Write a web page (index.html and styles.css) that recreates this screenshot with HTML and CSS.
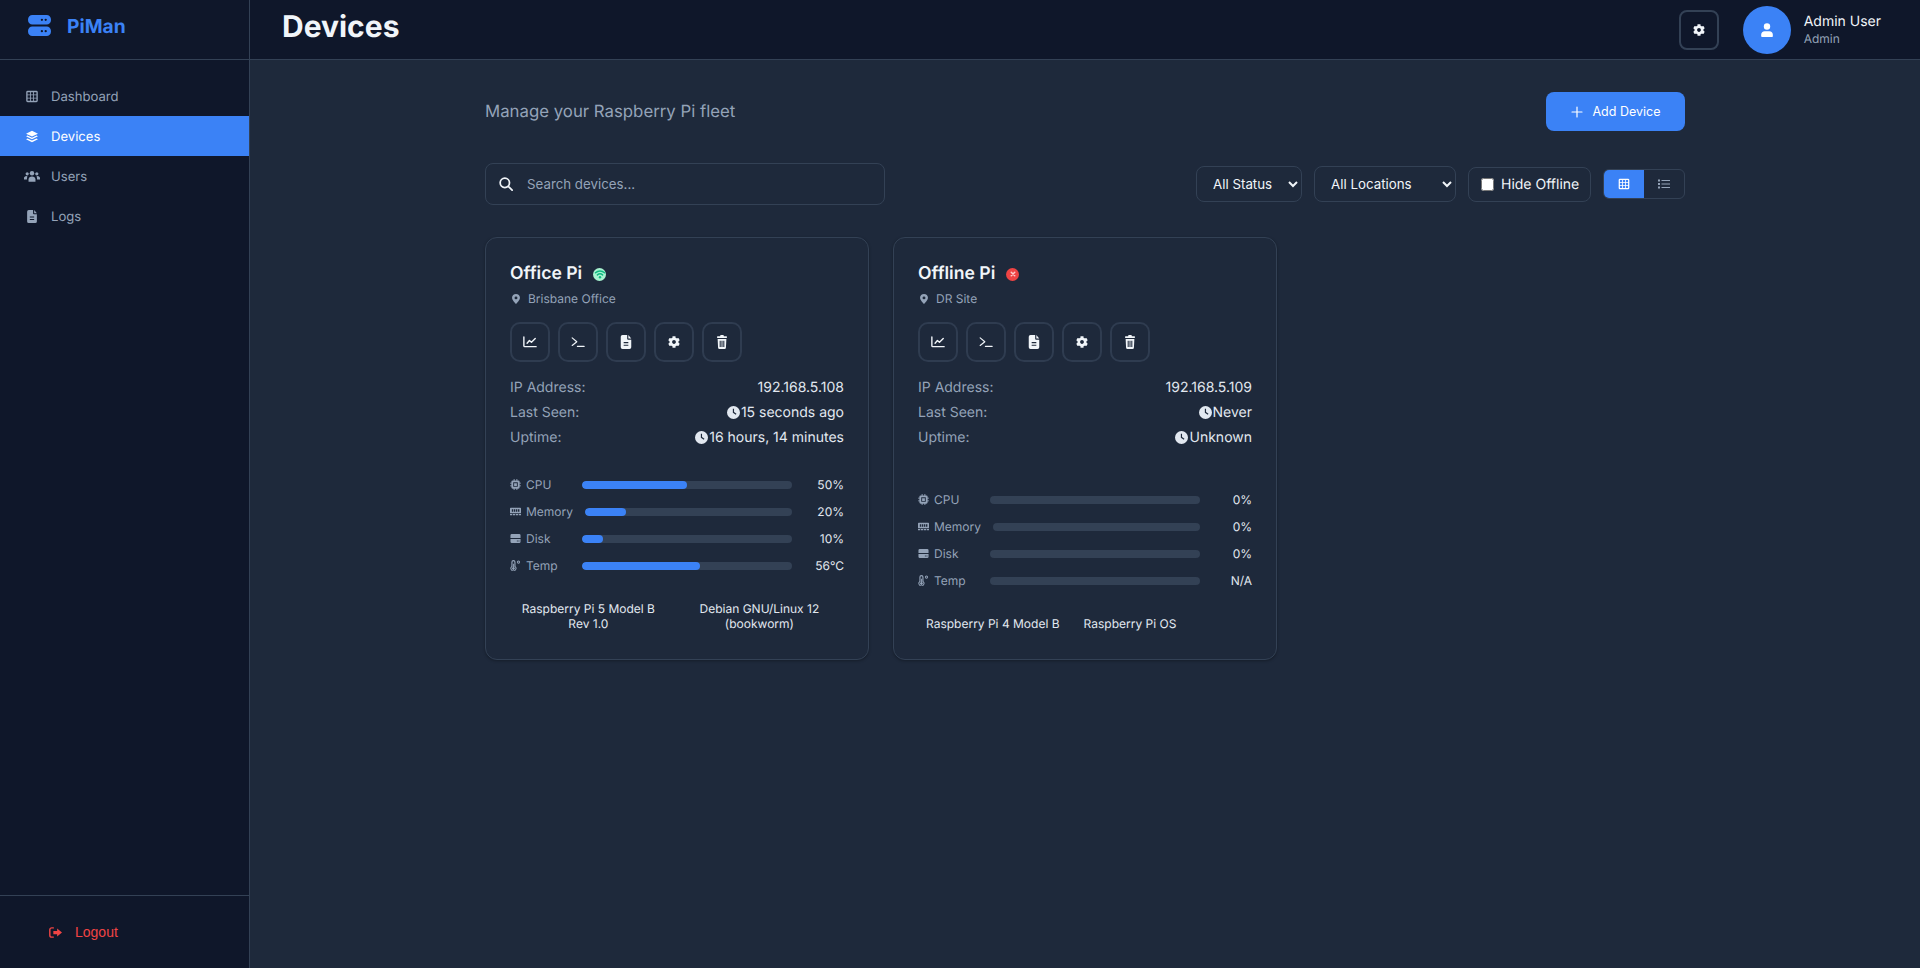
FILE: index.html
```html
<!DOCTYPE html>
<html>
    <head>
        <meta charset="utf-8" />
        <meta name="viewport" content="width=device-width, initial-scale=1" />
        <title>PiMan - Devices</title>
        <link rel="stylesheet" href="styles.css">
    </head>
    <body>
        <!-- icon sprite -->
        <svg class="sprite" xmlns="http://www.w3.org/2000/svg">
            <symbol id="i-server" viewBox="0 0 24 22">
                <path fill-rule="evenodd" d="M4.500 0h15a4.500 4.500 0 0 1 4.500 4.500v1a4.500 4.500 0 0 1-4.500 4.500h-15A4.500 4.500 0 0 1 0 5.500v-1A4.500 4.500 0 0 1 4.500 0zM14.500 3.800a1.200 1.200 0 1 0 0 2.400 1.200 1.200 0 0 0 0-2.400zM18.500 3.800a1.200 1.200 0 1 0 0 2.400 1.200 1.200 0 0 0 0-2.400zM4.500 12h15a4.500 4.500 0 0 1 4.500 4.500v1a4.500 4.500 0 0 1-4.500 4.500h-15A4.500 4.500 0 0 1 0 17.500v-1A4.500 4.500 0 0 1 4.500 12zM14.500 15.800a1.200 1.200 0 1 0 0 2.400 1.200 1.200 0 0 0 0-2.400zM18.500 15.800a1.200 1.200 0 1 0 0 2.400 1.200 1.200 0 0 0 0-2.400z"/>
            </symbol>
            <symbol id="i-grid" viewBox="-1.500 -1.500 27 27">
                <path fill-rule="evenodd" d="M3 0h18a3 3 0 0 1 3 3v18a3 3 0 0 1-3 3H3a3 3 0 0 1-3-3V3a3 3 0 0 1 3-3zM2.800 3v4.800h5V3zM9.600 3v4.800h4.800V3zM16.200 3v4.800h5V3zM2.800 9.600v4.800h5V9.600zM9.600 9.600v4.800h4.800V9.600zM16.200 9.600v4.800h5V9.600zM2.800 16.200V21h5v-4.800zM9.600 16.200V21h4.800v-4.800zM16.200 16.200V21h5v-4.800z"/>
            </symbol>
            <symbol id="i-layers" viewBox="0 0 24 24">
                <path d="M12 1.500l11 5.200-11 5.200L1 6.700z"/>
                <path d="M3.800 10.300L12 14.200l8.200-3.900 2.800 1.400-11 5.200-11-5.200z"/>
                <path d="M3.800 15.600L12 19.500l8.200-3.900 2.800 1.400-11 5.500L1 17z"/>
            </symbol>
            <symbol id="i-users" viewBox="0 0 30 24">
                <circle cx="6" cy="7" r="3"/><circle cx="24" cy="7" r="3"/><circle cx="15" cy="6" r="4.200"/>
                <path d="M8.500 22v-4.500c0-3.300 2.700-5.500 6.500-5.500s6.500 2.200 6.500 5.500V22z"/>
                <path d="M6.500 12c-.8 1.400-1 3.300-1 5.500H0v-2.500C0 12.800 2 11 4.500 11c.8 0 1.400.4 2 1zM23.500 12c.8 1.400 1 3.300 1 5.500H30v-2.500c0-2.200-2-4-4.500-4-.8 0-1.400.4-2 1z"/>
            </symbol>
            <symbol id="i-file" viewBox="0 0 24 24">
                <path fill-rule="evenodd" d="M6 0h8v6.500c0 1 .8 1.500 1.500 1.500H21v13a3 3 0 0 1-3 3H6a3 3 0 0 1-3-3V3a3 3 0 0 1 3-3zM8 12v2h8v-2zM8 16.500v2h8v-2zM16 0l5 6h-5z"/>
            </symbol>
            <symbol id="i-chart" viewBox="0 0 24 24">
                <path fill="none" stroke="currentColor" stroke-width="2.400" stroke-linecap="round" stroke-linejoin="round" d="M1.500 3.500v15c0 1 .5 1.500 1.500 1.500h19.500M7 14l4-4.500 3.500 3L21 6"/>
            </symbol>
            <symbol id="i-terminal" viewBox="0 0 24 24">
                <path fill="none" stroke="currentColor" stroke-width="2" stroke-linecap="round" stroke-linejoin="round" d="M2 5l8 6.500L2 18M11 19.500h11.500"/>
            </symbol>
            <symbol id="i-gear" viewBox="-40 -40 592 592">
                <path d="M487.4 315.7l-42.6-24.6c4.3-23.2 4.3-47 0-70.2l42.6-24.6c4.9-2.8 7.1-8.6 5.500-14-11.100-35.600-30-67.800-54.700-94.600-3.800-4.100-10-5.100-14.800-2.300L380.800 110c-17.900-15.400-38.500-27.300-60.800-35.100V25.800c0-5.600-3.900-10.500-9.400-11.700-36.700-8.200-74.300-7.800-109.200 0-5.500 1.200-9.400 6.100-9.400 11.700V75c-22.200 7.900-42.800 19.800-60.800 35.100L88.700 85.500c-4.900-2.800-11-1.900-14.800 2.300-24.700 26.700-43.600 58.900-54.700 94.600-1.700 5.400.6 11.200 5.500 14L67.300 221c-4.300 23.200-4.300 47 0 70.200l-42.600 24.600c-4.900 2.800-7.100 8.600-5.500 14 11.100 35.600 30 67.800 54.700 94.600 3.800 4.100 10 5.100 14.800 2.300l42.600-24.600c17.900 15.400 38.500 27.300 60.800 35.100v49.200c0 5.600 3.900 10.500 9.400 11.700 36.700 8.200 74.300 7.800 109.200 0 5.500-1.200 9.400-6.100 9.400-11.700v-49.200c22.200-7.900 42.800-19.800 60.800-35.100l42.600 24.600c4.900 2.800 11 1.900 14.800-2.300 24.700-26.700 43.600-58.900 54.700-94.600 1.500-5.500-.7-11.300-5.600-14.100zM256 336c-44.100 0-80-35.900-80-80s35.900-80 80-80 80 35.900 80 80-35.900 80-80 80z"/>
            </symbol>
            <symbol id="i-trash" viewBox="0 0 24 24">
                <path fill-rule="evenodd" d="M9.500 0h5l.8 2h4.200a1 1 0 0 1 1 1v1.300a.7.7 0 0 1-.7.7H4.200a.7.7 0 0 1-.7-.7V3a1 1 0 0 1 1-1h4.200zM4.500 6.800h15l-.8 14.900a2.400 2.400 0 0 1-2.400 2.300H7.700a2.400 2.400 0 0 1-2.400-2.300zM8 10v10.500h1.800V10zM11.100 10v10.500h1.800V10zM14.200 10v10.500H16V10z"/>
            </symbol>
            <symbol id="i-pin" viewBox="0 0 24 24">
                <path fill-rule="evenodd" d="M12 0c5.500 0 9.500 4 9.500 9.200C21.500 14 15 21.500 12 24 9 21.500 2.500 14 2.500 9.200 2.500 4 6.500 0 12 0zM12 5.800a3.500 3.500 0 1 0 0 7 3.500 3.500 0 0 0 0-7z"/>
            </symbol>
            <symbol id="i-clock" viewBox="0 0 24 24">
                <path fill-rule="evenodd" d="M12 0a12 12 0 1 1 0 24 12 12 0 0 1 0-24zM10.800 5v7.600l5.400 3.600 1.300-1.900-4.500-3V5z"/>
            </symbol>
            <symbol id="i-chip" viewBox="0 0 24 24">
                <path fill-rule="evenodd" d="M8 0h2v3h4V0h2v3h2a3 3 0 0 1 3 3v2h3v2h-3v4h3v2h-3v2a3 3 0 0 1-3 3h-2v3h-2v-3h-4v3H8v-3H6a3 3 0 0 1-3-3v-2H0v-2h3v-4H0V8h3V6a3 3 0 0 1 3-3h2zM7 7v10h10V7zM9 9h6v6H9z"/>
            </symbol>
            <symbol id="i-memory" viewBox="0 0 24 24">
                <path fill-rule="evenodd" d="M1.500 4h21A1.500 1.500 0 0 1 24 5.500v10.500H0V5.500A1.500 1.500 0 0 1 1.500 4zM4 7v5.500h3V7zM8.500 7v5.500h3V7zM13 7v5.500h3V7zM17.500 7v5.500h3V7zM0 17.500h5V20H0zM6.500 17.500h5V20h-5zM13 17.500h5V20h-5zM19.500 17.500H24V20h-4.500z"/>
            </symbol>
            <symbol id="i-disk" viewBox="0 0 24 24">
                <path fill-rule="evenodd" d="M4 2h16a3 3 0 0 1 3 3v6H1V5a3 3 0 0 1 3-3zM1 13h22v6a3 3 0 0 1-3 3H4a3 3 0 0 1-3-3zM15 16.300v2h2v-2zM18.500 16.300v2h2v-2z"/>
            </symbol>
            <symbol id="i-temp" viewBox="0 0 24 24">
                <path fill-rule="evenodd" d="M7.500 0a4.500 4.500 0 0 1 4.500 4.500v9a6.500 6.500 0 1 1-9 0v-9A4.500 4.500 0 0 1 7.500 0zm0 2.500a2 2 0 0 0-2 2v10.200a4.200 4.200 0 1 0 4 0V4.500a2 2 0 0 0-2-2zM6.500 8h2v8a2.800 2.800 0 1 1-2 0z"/>
                <path fill-rule="evenodd" d="M18.500 1a3.500 3.500 0 1 1 0 7 3.500 3.500 0 0 1 0-7zm0 2a1.500 1.500 0 1 0 0 3 1.500 1.500 0 0 0 0-3z"/>
            </symbol>
            <symbol id="i-search" viewBox="0 0 24 24">
                <path fill="none" stroke="currentColor" stroke-width="3" stroke-linecap="round" d="M10 2a8 8 0 1 1 0 16 8 8 0 0 1 0-16zM16 16l6.500 6.500"/>
            </symbol>
            <symbol id="i-plus" viewBox="0 0 24 24">
                <path fill="none" stroke="currentColor" stroke-width="2.400" stroke-linecap="round" d="M12 2v20M2 12h20"/>
            </symbol>
            <symbol id="i-user" viewBox="0 0 24 24">
                <circle cx="12" cy="6" r="5.500"/>
                <path d="M8 14h8c3.500 0 6 2.500 6 6v2.500c0 .8-.7 1.500-1.500 1.500h-17C2.700 24 2 23.300 2 22.500V20c0-3.500 2.500-6 6-6z"/>
            </symbol>
            <symbol id="i-logout" viewBox="0 0 24 24">
                <path d="M15 4.500L24 12l-9 7.500V15H8V9h7z"/>
                <path fill="none" stroke="currentColor" stroke-width="2.600" stroke-linecap="round" d="M8 3.500H5C3 3.500 1.500 5 1.500 7v10c0 2 1.500 3.500 3.500 3.500h3"/>
            </symbol>
            <symbol id="i-list" viewBox="0 0 24 24">
                <path d="M0 3h4v4H0zM0 10h4v4H0zM0 17h4v4H0z"/>
                <path d="M7 4h17v2H7zM7 11h17v2H7zM7 18h17v2H7z"/>
            </symbol>
            <symbol id="i-wifi" viewBox="0 0 24 24">
                <path fill="none" stroke="currentColor" stroke-width="3" stroke-linecap="round" d="M3 9.500c5-4.600 13-4.600 18 0M6.800 13.800c3-2.700 7.400-2.700 10.400 0"/>
                <circle cx="12" cy="18.500" r="2.400"/>
            </symbol>
            <symbol id="i-xmark" viewBox="0 0 24 24">
                <path fill="none" stroke="currentColor" stroke-width="3" stroke-linecap="round" d="M8.500 8.500l7 7M15.500 8.500l-7 7"/>
            </symbol>
        </svg>

        <div class="app">
            <aside class="sidebar">
                <div class="brand">
                    <svg class="brand-icon"><use href="#i-server" /></svg>
                    <span class="brand-name">PiMan</span>
                </div>
                <nav class="nav">
                    <a class="nav-item" href="#"><svg class="nav-icon"><use href="#i-grid" /></svg>Dashboard</a>
                    <a class="nav-item active" href="#"><svg class="nav-icon"><use href="#i-layers" /></svg>Devices</a>
                    <a class="nav-item" href="#"><svg class="nav-icon"><use href="#i-users" /></svg>Users</a>
                    <a class="nav-item" href="#"><svg class="nav-icon"><use href="#i-file" /></svg>Logs</a>
                </nav>
                <div class="sidebar-foot">
                    <button class="logout"><svg class="logout-icon"><use href="#i-logout" /></svg>Logout</button>
                </div>
            </aside>

            <div class="main">
                <header class="topbar">
                    <h1>Devices</h1>
                    <div class="topbar-right">
                        <button class="icon-btn"><svg class="icon"><use href="#i-gear" /></svg></button>
                        <div class="user">
                            <div class="avatar"><svg class="icon"><use href="#i-user" /></svg></div>
                            <div>
                                <div class="user-name">Admin User</div>
                                <div class="user-role">Admin</div>
                            </div>
                        </div>
                    </div>
                </header>

                <main class="content">
                    <div class="page-head">
                        <p class="subtitle">Manage your Raspberry Pi fleet</p>
                        <button class="add-btn"><svg class="icon"><use href="#i-plus" /></svg>Add Device</button>
                    </div>

                    <div class="toolbar">
                        <label class="search">
                            <svg class="search-icon"><use href="#i-search" /></svg>
                            <input type="text" placeholder="Search devices..." />
                        </label>
                        <div class="filters">
                            <select class="filter status-filter"><option>All Status</option></select>
                            <select class="filter location-filter"><option>All Locations</option></select>
                            <label class="hide-offline"><input type="checkbox" />Hide Offline</label>
                            <div class="view-toggle">
                                <button class="view-btn active"><svg class="icon"><use href="#i-grid" /></svg></button>
                                <button class="view-btn"><svg class="icon"><use href="#i-list" /></svg></button>
                            </div>
                        </div>
                    </div>

                    <div class="grid">
                        <section class="card">
                            <div class="card-title">
                                <h3>Office Pi</h3>
                                <span class="status online"><svg><use href="#i-wifi" /></svg></span>
                            </div>
                            <div class="location"><svg><use href="#i-pin" /></svg>Brisbane Office</div>
                            <div class="actions">
                                <button class="action"><svg class="icon"><use href="#i-chart" /></svg></button>
                                <button class="action"><svg class="icon"><use href="#i-terminal" /></svg></button>
                                <button class="action"><svg class="icon"><use href="#i-file" /></svg></button>
                                <button class="action"><svg class="icon"><use href="#i-gear" /></svg></button>
                                <button class="action"><svg class="icon"><use href="#i-trash" /></svg></button>
                            </div>
                            <div class="info">
                                <div class="info-row"><span class="info-label">IP Address:</span><span class="info-value">192.168.5.108</span></div>
                                <div class="info-row"><span class="info-label">Last Seen:</span><span class="info-value"><svg><use href="#i-clock" /></svg>15 seconds ago</span></div>
                                <div class="info-row"><span class="info-label">Uptime:</span><span class="info-value"><svg><use href="#i-clock" /></svg>16 hours, 14 minutes</span></div>
                            </div>
                            <div class="metrics">
                                <div class="metric"><span class="metric-label"><svg><use href="#i-chip" /></svg>CPU</span><div class="bar"><div class="bar-fill" style="width: 50%"></div></div><span class="metric-value">50%</span></div>
                                <div class="metric"><span class="metric-label"><svg><use href="#i-memory" /></svg>Memory</span><div class="bar"><div class="bar-fill" style="width: 20%"></div></div><span class="metric-value">20%</span></div>
                                <div class="metric"><span class="metric-label"><svg><use href="#i-disk" /></svg>Disk</span><div class="bar"><div class="bar-fill" style="width: 10%"></div></div><span class="metric-value">10%</span></div>
                                <div class="metric"><span class="metric-label"><svg><use href="#i-temp" /></svg>Temp</span><div class="bar"><div class="bar-fill" style="width: 56%"></div></div><span class="metric-value">56°C</span></div>
                            </div>
                            <div class="hardware">
                                <span>Raspberry Pi 5 Model B Rev 1.0</span>
                                <span>Debian GNU/Linux 12 (bookworm)</span>
                            </div>
                        </section>

                        <section class="card">
                            <div class="card-title">
                                <h3>Offline Pi</h3>
                                <span class="status offline"><svg><use href="#i-xmark" /></svg></span>
                            </div>
                            <div class="location"><svg><use href="#i-pin" /></svg>DR Site</div>
                            <div class="actions">
                                <button class="action"><svg class="icon"><use href="#i-chart" /></svg></button>
                                <button class="action"><svg class="icon"><use href="#i-terminal" /></svg></button>
                                <button class="action"><svg class="icon"><use href="#i-file" /></svg></button>
                                <button class="action"><svg class="icon"><use href="#i-gear" /></svg></button>
                                <button class="action"><svg class="icon"><use href="#i-trash" /></svg></button>
                            </div>
                            <div class="info">
                                <div class="info-row"><span class="info-label">IP Address:</span><span class="info-value">192.168.5.109</span></div>
                                <div class="info-row"><span class="info-label">Last Seen:</span><span class="info-value"><svg><use href="#i-clock" /></svg>Never</span></div>
                                <div class="info-row"><span class="info-label">Uptime:</span><span class="info-value"><svg><use href="#i-clock" /></svg>Unknown</span></div>
                            </div>
                            <div class="metrics">
                                <div class="metric"><span class="metric-label"><svg><use href="#i-chip" /></svg>CPU</span><div class="bar"></div><span class="metric-value">0%</span></div>
                                <div class="metric"><span class="metric-label"><svg><use href="#i-memory" /></svg>Memory</span><div class="bar"></div><span class="metric-value">0%</span></div>
                                <div class="metric"><span class="metric-label"><svg><use href="#i-disk" /></svg>Disk</span><div class="bar"></div><span class="metric-value">0%</span></div>
                                <div class="metric"><span class="metric-label"><svg><use href="#i-temp" /></svg>Temp</span><div class="bar"></div><span class="metric-value">N/A</span></div>
                            </div>
                            <div class="hardware">
                                <span>Raspberry Pi 4 Model B</span>
                                <span>Raspberry Pi OS</span>
                            </div>
                        </section>
                    </div>
                </main>
            </div>
        </div>
    </body>
</html>
```

FILE: styles.css
```css
* {
    box-sizing: border-box;
}

html,
body {
    height: 100%;
}

body {
    margin: 0;
    background: #1e293b;
    color: #f1f5f9;
    font-family: Inter, "Liberation Sans", sans-serif;
    font-size: 14px;
    text-rendering: geometricPrecision;
    overflow: hidden;
}

button {
    cursor: pointer;
}

.sprite {
    display: none;
}

.icon {
    width: 14px;
    height: 14px;
    fill: currentColor;
}

.app {
    display: flex;
    height: 100%;
}

/* sidebar */
.sidebar {
    width: 250px;
    flex-shrink: 0;
    background: #0f172a;
    border-right: 1px solid #334155;
    display: flex;
    flex-direction: column;
}

.brand {
    height: 60px;
    padding: 0 28px 8px;
    display: flex;
    align-items: center;
    gap: 16px;
    border-bottom: 1px solid #334155;
    color: #3b82f6;
}

.brand-icon {
    width: 23px;
    height: 21px;
    fill: currentColor;
}

.brand-name {
    font-size: 19.2px;
    font-weight: 700;
}

.nav {
    flex: 1;
    padding-top: 16px;
}

.nav-item {
    height: 40px;
    padding: 1px 24px 0;
    display: flex;
    align-items: center;
    gap: 11px;
    font-size: 13.1px;
    color: #94a3b8;
    text-decoration: none;
}

.nav-item.active {
    background: #3b82f6;
    color: #fff;
}

.nav-icon {
    width: 16px;
    height: 13px;
    fill: currentColor;
}

.sidebar-foot {
    height: 73px;
    padding: 0 49px;
    display: flex;
    align-items: center;
    border-top: 1px solid #334155;
}

.logout {
    padding: 0;
    border: 0;
    background: none;
    color: #ef4444;
    font-family: "Liberation Sans", sans-serif;
    font-size: 14px;
    display: flex;
    align-items: center;
    gap: 13px;
}

.logout-icon {
    width: 13px;
    height: 13px;
    fill: currentColor;
}

/* top bar */
.main {
    flex: 1;
    min-width: 0;
}

.topbar {
    height: 60px;
    padding: 0 39px 0 32px;
    background: #0f172a;
    border-bottom: 1px solid #334155;
    display: flex;
    align-items: center;
    justify-content: space-between;
}

.topbar h1 {
    margin: 0 0 6px;
    font-size: 30px;
    font-weight: 700;
}

.topbar-right {
    display: flex;
    align-items: center;
    gap: 24px;
}

.icon-btn {
    width: 40px;
    height: 40px;
    padding: 0;
    border: 2px solid #334155;
    border-radius: 8px;
    background: none;
    color: #f1f5f9;
    display: flex;
    align-items: center;
    justify-content: center;
}

.user {
    display: flex;
    align-items: center;
    gap: 13px;
}

.avatar {
    width: 48px;
    height: 48px;
    border-radius: 50%;
    background: #3b82f6;
    color: #fff;
    display: flex;
    align-items: center;
    justify-content: center;
}

.user-name {
    font-size: 14px;
    line-height: 18px;
}

.user-role {
    font-size: 12px;
    line-height: 15px;
    color: #94a3b8;
}

/* page */
.content {
    max-width: 1200px;
    margin: 0 auto;
    padding-top: 32px;
}

.page-head {
    display: flex;
    align-items: center;
    justify-content: space-between;
    margin-bottom: 32px;
}

.subtitle {
    margin: 1px 0 0;
    font-size: 16.8px;
    color: #94a3b8;
}

.add-btn {
    width: 139px;
    height: 39px;
    padding: 0;
    border: 0;
    border-radius: 8px;
    background: #3b82f6;
    color: #fff;
    font-family: Inter, sans-serif;
    font-size: 12.5px;
    font-weight: 400;
    display: flex;
    align-items: center;
    justify-content: center;
    gap: 10px;
}

.add-btn .icon {
    width: 12px;
    height: 12px;
}

.toolbar {
    display: flex;
    align-items: center;
    justify-content: space-between;
    margin-bottom: 32px;
}

.search {
    width: 400px;
    height: 42px;
    padding: 0 13px;
    border: 1px solid #334155;
    border-radius: 8px;
    display: flex;
    align-items: center;
    gap: 12px;
}

.search-icon {
    width: 14px;
    height: 14px;
    flex-shrink: 0;
    color: #f1f5f9;
}

.search input {
    flex: 1;
    min-width: 0;
    padding: 1px 2px;
    border: 0;
    outline: 0;
    background: none;
    color: #f1f5f9;
    font-family: Inter, sans-serif;
    font-size: 13.3px;
}

.search input::placeholder {
    color: #94a3b8;
}

.filters {
    display: flex;
    align-items: center;
    gap: 12px;
}

.filter {
    height: 36px;
    padding: 0 2px 0 12px;
    border: 1px solid #334155;
    border-radius: 8px;
    background: #1e293b;
    color: #f1f5f9;
    font-family: Inter, sans-serif;
    font-size: 13.333px;
}

.status-filter {
    width: 106px;
}

.location-filter {
    width: 142px;
}

.hide-offline {
    height: 35px;
    width: 123px;
    padding: 0 10px 0 12px;
    border: 1px solid #334155;
    border-radius: 8px;
    display: flex;
    align-items: center;
    gap: 7px;
    font-size: 14px;
    white-space: nowrap;
}

.hide-offline input {
    width: 13px;
    height: 13px;
    margin: 0;
    flex-shrink: 0;
}

.view-toggle {
    display: flex;
    width: 82px;
    height: 30px;
    border: 1px solid #334155;
    border-radius: 6px;
    overflow: hidden;
}

.view-btn {
    flex: 1;
    padding: 0;
    border: 0;
    background: none;
    color: #94a3b8;
    display: flex;
    align-items: center;
    justify-content: center;
}

.view-btn .icon {
    width: 12px;
    height: 12px;
}

.view-btn.active {
    background: #3b82f6;
    color: #fff;
}

/* device cards */
.grid {
    display: grid;
    grid-template-columns: repeat(3, 1fr);
    gap: 24px;
}

.card {
    padding: 24px;
    background: #1e293b;
    border: 1px solid #334155;
    border-radius: 12px;
    box-shadow: 0 1px 3px rgba(0, 0, 0, 0.3);
    display: flex;
    flex-direction: column;
}

.card-title {
    display: flex;
    align-items: center;
    gap: 11px;
    padding-top: 1px;
}

.card-title h3 {
    margin: 0;
    font-size: 17.6px;
    font-weight: 600;
    line-height: 22px;
}

.status {
    width: 13px;
    height: 13px;
    border-radius: 50%;
    display: flex;
    align-items: center;
    justify-content: center;
}

.status svg {
    width: 12px;
    height: 12px;
    fill: currentColor;
}

.status.online {
    background: #a7f3d0;
    color: #10b981;
}

.status.offline {
    background: #ef4444;
    color: #fecaca;
}

.location {
    margin-top: 6px;
    display: flex;
    align-items: center;
    gap: 7px;
    font-size: 12px;
    line-height: 15px;
    color: #94a3b8;
}

.location svg {
    width: 10px;
    height: 10px;
    margin-left: 1px;
    fill: currentColor;
}

.actions {
    margin-top: 16px;
    display: flex;
    gap: 8px;
}

.action {
    width: 40px;
    height: 40px;
    padding: 0;
    border: 2px solid #2f3c50;
    border-radius: 10px;
    background: none;
    color: #f1f5f9;
    display: flex;
    align-items: center;
    justify-content: center;
}

.info {
    margin-top: 13px;
}

.info-row {
    height: 25px;
    display: flex;
    align-items: center;
    justify-content: space-between;
}

.info-label {
    color: #94a3b8;
}

.info-value {
    color: #e2e8f0;
    display: flex;
    align-items: center;
}

.info-value svg {
    width: 13px;
    height: 13px;
    margin-right: 1px;
    fill: currentColor;
}

.metrics {
    margin-top: auto;
    padding-top: 27px;
    display: flex;
    flex-direction: column;
    gap: 12px;
}

.metric {
    display: flex;
    align-items: center;
    gap: 12px;
    height: 15px;
}

.metric-label {
    min-width: 60px;
    display: flex;
    align-items: center;
    gap: 5px;
    font-size: 12px;
    color: #94a3b8;
}

.metric-label svg {
    width: 11px;
    height: 11px;
    flex-shrink: 0;
    fill: currentColor;
}

.bar {
    flex: 1;
    height: 8px;
    border-radius: 4px;
    background: #334155;
    overflow: hidden;
}

.bar-fill {
    height: 100%;
    border-radius: 4px;
    background: #3b82f6;
}

.metric-value {
    min-width: 40px;
    text-align: right;
    font-size: 12px;
    color: #e2e8f0;
}

.hardware {
    margin-top: 24px;
    display: flex;
    gap: 8px;
    font-size: 12px;
    line-height: 15px;
    color: #e2e8f0;
    text-align: center;
}

.hardware span {
    padding: 4px 8px;
}
```
